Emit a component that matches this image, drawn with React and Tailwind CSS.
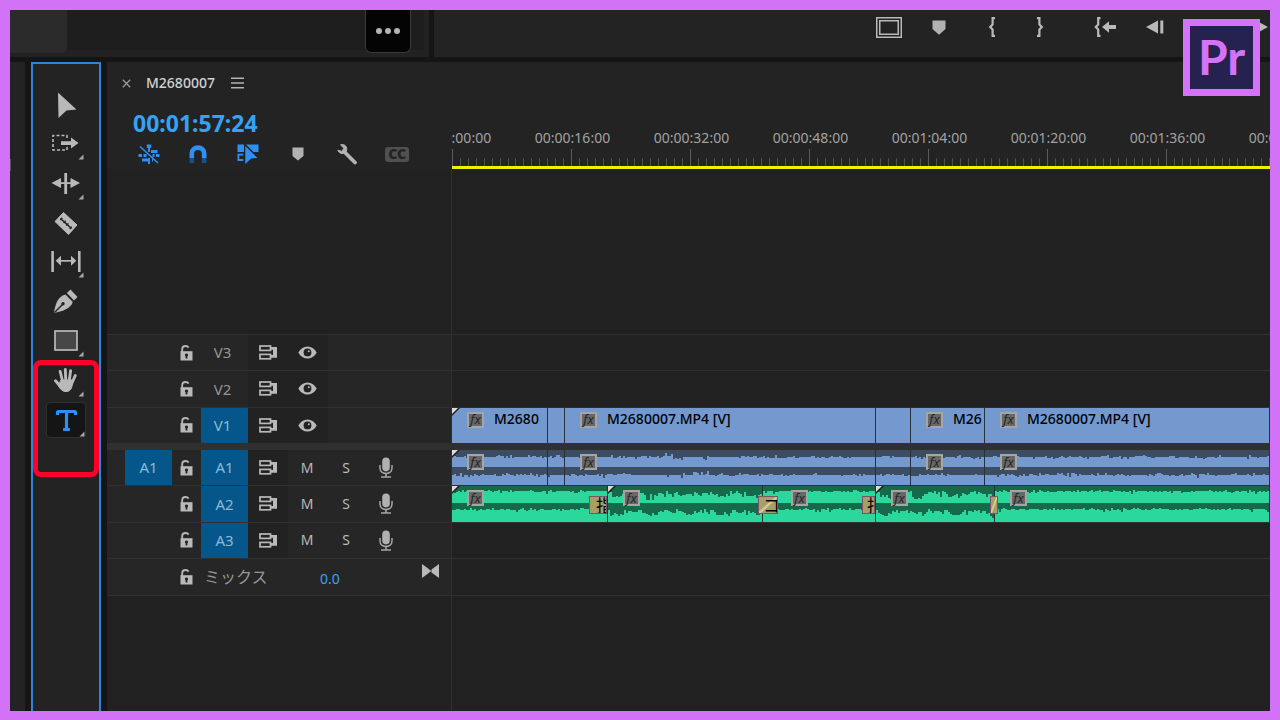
import { Type } from 'lucide-react';

const VIDEO_CLIPS = [
  { id: 1, width: 96, fx: true, label: 'M2680', cut: true },
  { id: 2, width: 17 },
  { id: 3, width: 311, fx: true, label: 'M2680007.MP4 [V]' },
  { id: 4, width: 35 },
  { id: 5, width: 74, fx: true, label: 'M26' },
  { id: 6, fx: true, label: 'M2680007.MP4 [V]' },
];

const A2_CLIPS = [
  { id: 1, width: 156, fx: true, cut: true },
  { id: 2, width: 155, fx: true, cut: true, loud: true },
  { id: 3, width: 113, fx: true, late: true },
  { id: 4, width: 119, fx: true, cut: true, loud: true },
  { id: 5, fx: true },
];

const TIMES = ['00:00:00:00', '00:00:16:00', '00:00:32:00', '00:00:48:00', '00:01:04:00', '00:01:20:00', '00:01:36:00', '00:01:52:00'];

// Small seeded generator so the waveforms are the same on every render
function rng(seed) {
  let s = seed;
  const next = () => {
    s = (s * 16807) % 2147483647;
    return s / 2147483647;
  };
  for (let i = 0; i < 5; i++) next();
  return next;
}

function wavePath(seed, kind, top, bottom, length) {
  const rand = rng(seed);
  const step = 2;
  let d = `M0 ${bottom}`;
  let burst = 0;
  for (let x = 0; x < length; x += step) {
    let level;
    if (kind === 'loud') {
      // deep dips between phrases, every 30-40px
      const swell = Math.max(0, Math.sin(x / 5.5)) * 3;
      level = 7 + swell + (rand() - 0.5) * 4 + (rand() > 0.88 ? 3 : 0);
    } else if (kind === 'calm') {
      level = 4.5 + (rand() > 0.6 ? 1 : 0) + (rand() > 0.94 ? 2 : 0) - (rand() > 0.8 ? 1 : 0);
    } else {
      if (burst <= 0 && rand() > 0.8) burst = 3 + Math.floor(rand() * 10);
      burst -= 1;
      // the busiest stretch of speech sits around 16-32s
      const busy = length > 300 && length < 400 && x > 90 && x < 145 ? 4 : 1.4;
      level = 7 + (burst > 0 ? (rand() - 0.6) * 2 * busy : 0) + (rand() > 0.96 ? 2 : 0);
    }
    const y = top + Math.round(level);
    d += ` L${x} ${y} L${x + step} ${y}`;
  }
  return `${d} L${length} ${bottom} Z`;
}

function Waveform({ seed, kind, length, className }) {
  return (
    <svg className={`absolute inset-0 h-full w-full ${className}`} fill="currentColor" shapeRendering="crispEdges" aria-hidden="true">
      <path d={wavePath(seed, kind, 0, 17, length)} />
      <path d={wavePath(seed + 1, kind, 18, 36, length)} />
    </svg>
  );
}

function Corner() {
  return <path d="M32.5 33.5 L37.5 28.5 V33.5 Z" fill="#a8a8a8" />;
}

const TOOLS = [
  { name: 'Selection', art: <path d="M12 5.5 L30.5 22.5 L20.5 23.5 L12.5 31 Z" fill="#b9b9b9" /> },
  {
    name: 'Track Select Forward',
    more: true,
    art: (
      <>
        <path d="M21 12 V9.5 H7 V24 H21 V21" fill="none" stroke="#b9b9b9" strokeWidth="1.6" strokeDasharray="3 2" />
        <path d="M15 15.2 H25 V11.5 L32.5 17 L25 22.5 V19 H15 Z" fill="#b9b9b9" />
      </>
    ),
  },
  {
    name: 'Ripple Edit',
    more: true,
    art: (
      <g fill="#b9b9b9">
        <rect x="18.3" y="7" width="2.8" height="21" />
        <path d="M5.5 17 L15 12 V22 Z M34 17 L24.5 12 V22 Z" />
        <rect x="13" y="16.2" width="14" height="1.8" />
      </g>
    ),
  },
  {
    name: 'Razor',
    art: (
      <>
        <path d="M17.5 7.5 L31 20 L22.5 29.5 L9 16.5 Z" fill="#b9b9b9" stroke="#b9b9b9" strokeLinejoin="round" />
        <path d="M14.5 13.5 L25.5 23.5" stroke="#232323" strokeWidth="1.6" />
        <path d="M14.3 15 L16.3 12.8 M17.6 18 L19.6 15.8 M20.4 20.6 L22.4 18.4 M23.7 24 L25.7 21.8" stroke="#232323" strokeWidth="1.4" />
      </>
    ),
  },
  {
    name: 'Slip',
    more: true,
    art: (
      <g fill="#b9b9b9">
        <rect x="5.3" y="7" width="2.6" height="21" />
        <rect x="32" y="7" width="2.6" height="21" />
        <path d="M9.7 16.8 L15 11.8 V21.8 Z M30.3 16.8 L25 11.8 V21.8 Z" />
        <rect x="14" y="16" width="12" height="1.7" />
      </g>
    ),
  },
  {
    name: 'Pen',
    art: (
      <>
        <path d="M24.5 5.5 L31.5 13 L28 16.5 L20.8 9 Z" fill="#b9b9b9" />
        <path d="M19.5 10.5 L26.8 18 C24.5 24.5 18 26.5 8.5 29 L7.8 28.2 C10 19 11.5 13 19.5 10.5 Z" fill="#b9b9b9" />
        <path d="M8.5 28.5 L16.5 20.5" stroke="#232323" strokeWidth="1.4" />
        <circle cx="17" cy="19.8" r="1.7" fill="#232323" />
      </>
    ),
  },
  { name: 'Rectangle', more: true, art: <rect x="9" y="8" width="22" height="19" fill="#474747" stroke="#b9b9b9" strokeWidth="1.7" /> },
  {
    name: 'Hand',
    more: true,
    art: (
      <g stroke="#b9b9b9" strokeLinecap="round" fill="none">
        <path d="M14.2 8.5 L16.5 18 M19.3 6.5 L19.8 18 M24.6 7.8 L23.2 18 M29.3 12.5 L26 20" strokeWidth="2.9" />
        <path d="M9.5 17.8 L15 24" strokeWidth="3" />
        <path d="M15.2 17 H26.8 L26.3 22 C25.5 26.5 23.5 28.6 20 28.6 C16.5 28.6 14.5 26.5 12.5 23 Z" fill="#b9b9b9" strokeWidth="1" strokeLinejoin="round" />
      </g>
    ),
  },
];

function ToolPanel() {
  return (
    <aside className="relative w-[70px] shrink-0 border-2 border-b-0 border-[#2f84dc] bg-[#232323] pt-[21px]">
      <div className="grid h-[355px] grid-rows-9 justify-center">
        {TOOLS.map(tool => (
          <button key={tool.name} type="button" aria-label={tool.name} className="flex items-center">
            <svg width="40" height="36" viewBox="0 0 40 36">
              {tool.art}
              {tool.more && <Corner />}
            </svg>
          </button>
        ))}
        <button type="button" aria-label="Type" className="relative flex h-9 w-10 items-center justify-center self-center rounded border border-[#303030] bg-[#151515]">
          <Type className="text-[#2f8ff5]" size={27} strokeWidth={2.8} strokeLinecap="butt" strokeLinejoin="miter" />
          <svg className="absolute inset-0" width="40" height="36" viewBox="0 0 40 36">
            <Corner />
          </svg>
        </button>
      </div>
      <div className="pointer-events-none absolute inset-x-0 top-[296px] h-[117px] rounded-lg border-[5px] border-[#ff0028]" />
    </aside>
  );
}

function MarkerIcon() {
  return (
    <svg width="14" height="15" viewBox="0 0 14 15">
      <path d="M0.5 0.5 H13.5 V9 L7 14.8 L0.5 9 Z" fill="#b2b2b2" />
    </svg>
  );
}

function Brace({ flip }) {
  return (
    <svg width="8" height="20" viewBox="0 0 8 20" className={flip ? 'rotate-180' : ''}>
      <path d="M7 1.2 H4.6 V7.5 L2.2 10 L4.6 12.5 V18.8 H7" fill="none" stroke="#b9b9b9" strokeWidth="2.2" />
    </svg>
  );
}

function MonitorBar() {
  const btn = 'flex h-[34px] items-center justify-center';
  return (
    <div className="flex min-w-0 flex-1 items-start justify-end overflow-hidden bg-[#232323]">
      <button type="button" aria-label="Safe Margins" className={`${btn} w-[50px]`}>
        <svg width="26" height="21" viewBox="0 0 26 21" fill="none" stroke="#b9b9b9">
          <rect x="0.75" y="0.75" width="24.5" height="19.5" strokeWidth="1.5" />
          <rect x="3.75" y="3.75" width="18.5" height="13.5" strokeWidth="1.5" />
        </svg>
      </button>
      <button type="button" aria-label="Add Marker" className={`${btn} w-[50px]`}><MarkerIcon /></button>
      <div className="mr-4 ml-1 flex">
        <button type="button" aria-label="Mark In" className={`${btn} w-12`}><Brace /></button>
        <button type="button" aria-label="Mark Out" className={`${btn} w-12`}><Brace flip /></button>
      </div>
      <button type="button" aria-label="Go to In" className={`${btn} w-[50px]`}>
        <svg width="23" height="20" viewBox="0 0 23 20">
          <path d="M6.5 1.2 H4.2 V7.5 L1.8 10 L4.2 12.5 V18.8 H6.5" fill="none" stroke="#b9b9b9" strokeWidth="2.2" />
          <path d="M8 10 L15 4.2 V8 H22 V12 H15 V15.8 Z" fill="#b9b9b9" />
        </svg>
      </button>
      <button type="button" aria-label="Step Back" className={`${btn} w-[50px]`}>
        <svg width="20" height="14" viewBox="0 0 20 14" fill="#b9b9b9">
          <path d="M1 7 L13 0.5 V13.5 Z" />
          <rect x="15.3" y="0.5" width="3" height="13" />
        </svg>
      </button>
      <button type="button" aria-label="Play" className={`${btn} w-[50px]`}>
        <svg width="16" height="18" viewBox="0 0 16 18" fill="#b9b9b9"><path d="M1 1 L15 9 L1 17 Z" /></svg>
      </button>
      <button type="button" aria-label="Step Forward" className={`${btn} w-10`}>
        <svg width="36" height="14" viewBox="0 0 36 14" fill="#b9b9b9">
          <rect x="19" y="0.5" width="3" height="13" />
          <path d="M24 0.5 L36 7 L24 13.5 Z" />
        </svg>
      </button>
    </div>
  );
}

function TopBar() {
  return (
    <header className="flex h-[47px] shrink-0">
      <div className="flex w-[419px] shrink-0 bg-[#222222] pr-[5px]">
        <div className="h-[43px] w-[57px] rounded-br-md bg-[#2b2b2b]" />
        <div className="flex h-10 flex-1 justify-end bg-[#1e1e1e] pr-[13px]">
          <button type="button" aria-label="More" className="flex h-[43px] w-[46px] items-center justify-center gap-[3px] rounded-b-md border border-t-0 border-[#3a3a3a] bg-[#040404] pb-px">
            <span className="size-[6px] rounded-full bg-[#b5b5b5]" />
            <span className="size-[6px] rounded-full bg-[#b5b5b5]" />
            <span className="size-[6px] rounded-full bg-[#b5b5b5]" />
          </button>
        </div>
      </div>
      <div className="w-[5px] shrink-0" />
      <MonitorBar />
    </header>
  );
}

function LockIcon() {
  return (
    <svg width="13" height="16" viewBox="0 0 13 16">
      <path d="M2.2 7 V4.2 C2.2 1.8 4 1 5.5 1 C7 1 8 1.4 8.6 2.6" fill="none" stroke="#b9b9b9" strokeWidth="1.8" />
      <rect x="0.5" y="6.2" width="12" height="9.3" fill="#b9b9b9" />
      <path d="M6.5 8.4 a1.7 1.7 0 0 1 0.9 3.1 V13.6 H5.6 V11.5 a1.7 1.7 0 0 1 0.9 -3.1 Z" fill="#262626" />
    </svg>
  );
}

function SyncIcon() {
  return (
    <svg width="19" height="15" viewBox="0 0 19 15" fill="none" stroke="#b9b9b9">
      <rect x="1" y="1" width="10.5" height="4.4" strokeWidth="1.7" />
      <rect x="1" y="9.4" width="10.5" height="4.4" strokeWidth="1.7" />
      <path d="M12 2 H18 V12.8 H12 V10 H14 V4.8 H12 Z" fill="#b9b9b9" stroke="none" />
    </svg>
  );
}

function EyeIcon() {
  return (
    <svg width="19" height="13" viewBox="0 0 19 13">
      <path d="M0.3 6.5 C4.5 -1.6 14.5 -1.6 18.7 6.5 C14.5 14.6 4.5 14.6 0.3 6.5 Z" fill="#b9b9b9" />
      <circle cx="9.5" cy="6.4" r="3.9" fill="#222222" />
      <circle cx="10.8" cy="5.2" r="1" fill="#b9b9b9" />
    </svg>
  );
}

function MicIcon() {
  return (
    <svg width="14" height="21" viewBox="0 0 14 21" fill="none" stroke="#a6a6a6">
      <rect x="3.2" y="0.4" width="7.6" height="14" rx="3.8" fill="#b0b0b0" stroke="none" />
      <path d="M1 8 V11 C1 18.2 13 18.2 13 11 V8" strokeWidth="1.5" />
      <path d="M7 16.5 V20 M2 20 H12" strokeWidth="1.6" />
    </svg>
  );
}

function TrackHeader({ name, source, active, audio }) {
  return (
    <div className="flex border-t border-[#303030] bg-[#262626] pl-[18px] text-[15px] text-[#969696]">
      <button type="button" aria-label={`Source ${name}`} className={`w-[47px] ${source ? 'bg-[#05568a] text-[#8db9d8]' : ''}`}>{source}</button>
      <button type="button" aria-label={`Lock ${name}`} className="flex w-[29px] items-center justify-center"><LockIcon /></button>
      <button type="button" className={`w-[47px] ${audio ? '' : 'pr-1'} ${active ? 'bg-[#05568a] text-[#8db9d8]' : ''}`}>{name}</button>
      <button type="button" aria-label={`Sync Lock ${name}`} className="flex w-10 items-center justify-center bg-[#222222]"><SyncIcon /></button>
      {audio ? (
        <>
          <button type="button" aria-label={`Mute ${name}`} className="w-[38px] text-sm text-[#b9b9b9]">M</button>
          <button type="button" aria-label={`Solo ${name}`} className="w-10 text-sm text-[#b9b9b9]">S</button>
          <button type="button" aria-label={`Record ${name}`} className="flex w-10 items-center justify-center"><MicIcon /></button>
        </>
      ) : (
        <button type="button" aria-label={`Toggle Output ${name}`} className="flex w-10 items-center justify-center bg-[#222222] pr-[2px]"><EyeIcon /></button>
      )}
    </div>
  );
}

function TimelineTools() {
  const btn = 'flex items-center justify-center';
  return (
    <div className="ml-[17px] grid h-[22px] w-[298px] grid-cols-6">
      <button type="button" aria-label="Insert as nests" className={btn}>
        <svg width="22" height="21" viewBox="0 0 22 21" stroke="#2f8ff5" fill="#2f8ff5">
          <path d="M2 2.5 L20 19" strokeWidth="1.6" />
          <path d="M11 1 V8 M11 14 V20" strokeWidth="2" />
          <rect x="8.8" y="0.5" width="4.4" height="3.4" stroke="none" />
          <path d="M13 7.5 H19.5 M14.5 11.5 H16.5 M18 11.5 H21.5 M0.5 11.5 H4 M5.5 11.5 H8.5 M4 16 H10 M14 16 H15" strokeWidth="2.8" />
        </svg>
      </button>
      <button type="button" aria-label="Snap" className={btn}>
        <svg width="18" height="18" viewBox="0 0 18 18" fill="none" strokeWidth="4.6">
          <path d="M2.8 13 V8.5 C2.8 0.6 15.2 0.6 15.2 8.5 V13" stroke="#2f8ff5" />
          <path d="M2.8 13 V18 M15.2 13 V18" stroke="#1a4f85" />
        </svg>
      </button>
      <button type="button" aria-label="Linked Selection" className={btn}>
        <svg width="22" height="20" viewBox="0 0 22 20" fill="#2f8ff5">
          <path d="M0.5 0.5 H7 V8 H0.5 Z M9 0.5 H21.5 V8 H16.5 Z" />
          <path d="M6.3 10.6 H1.4 V16 H6.3" fill="none" stroke="#2f8ff5" strokeWidth="1.8" />
          <path d="M8.3 2 L20.5 14 L14.2 14.5 L8.3 20 Z" />
        </svg>
      </button>
      <button type="button" aria-label="Add Marker" className={btn}>
        <svg width="12" height="14" viewBox="0 0 12 14"><path d="M0.5 0.5 H11.5 V9 L6 13.6 L0.5 9 Z" fill="#b2b2b2" /></svg>
      </button>
      <button type="button" aria-label="Timeline Display Settings" className={btn}>
        <svg width="22" height="22" viewBox="0 0 22 22" fill="none" stroke="#b2b2b2">
          <path d="M9 9.5 L19 19.5" strokeWidth="3.8" strokeLinecap="round" />
          <path d="M4.6 1.8 C9 0.6 11.8 4.2 10.4 8 C8.6 11.8 3.2 11.2 1.8 7.2 L6 8.4 L7.8 5.2 Z" fill="#b2b2b2" strokeWidth="1" />
        </svg>
      </button>
      <button type="button" aria-label="Captions" className={btn}>
        <span className="flex h-[15px] w-6 items-center justify-center rounded-[3px] bg-[#505050] text-sm font-black text-[#232323]">CC</span>
      </button>
    </div>
  );
}

function Ruler() {
  const ticks = Array.from({ length: 240 }, (_, i) => i);
  return (
    <div className="flex h-[65px] flex-col justify-end overflow-hidden pl-px">
      <div className="-ml-[58px] flex pb-px text-sm leading-5 text-[#a2a2a2]">
        {TIMES.map(time => <span key={time} className="w-[119px] shrink-0 text-center">{time}</span>)}
      </div>
      <svg className="h-[17px] w-full shrink-0" aria-hidden="true">
        {ticks.map(i => (
          <rect key={i} x={Math.round((i * 119) / 15)} y={i % 15 ? 9 : 0} width="1" height={i % 15 ? 8 : 17} fill={i % 15 ? '#4d4d4d' : '#5c5c5c'} />
        ))}
      </svg>
      <div className="h-[3px] shrink-0 bg-[#f2f000]" />
    </div>
  );
}

function FxBadge() {
  return (
    <span className="relative flex h-4 w-[17px] shrink-0 items-center justify-center border-2 border-[#a5a5a5] bg-[#686868] text-[13px] leading-none text-[#262626] italic">fx</span>
  );
}

function CutCorner() {
  return (
    <svg className="absolute top-0 left-0" width="8" height="8" viewBox="0 0 8 8">
      <path d="M0 0 H8 L0 8 Z" fill="#1c1c1c" />
      <path d="M0 0 H6 L0 6 Z" fill="#dcdcdc" />
    </svg>
  );
}

function Clip({ clip, tone, children }) {
  return (
    <div
      style={clip.width ? { width: clip.width } : undefined}
      className={`relative flex items-start overflow-hidden border-r border-[#26303c] pt-1 ${clip.late ? 'pl-7' : 'pl-[15px]'} ${clip.width ? 'shrink-0' : 'flex-1'} ${tone}`}
    >
      {children}
      {clip.cut && <CutCorner />}
      {clip.fx && <FxBadge />}
      {clip.label && <span className="ml-[10px] text-sm leading-[14px] font-medium whitespace-nowrap text-black">{clip.label}</span>}
    </div>
  );
}

// Audio transition boxes lie over the cut between two clips
function Transition({ className, children }) {
  return (
    <div className={`absolute top-[10px] h-[18px] overflow-hidden border border-[#76576a] bg-[#a89f68] text-[17px] leading-[17px] whitespace-nowrap text-black ${className}`}>
      {children}
    </div>
  );
}

function Tracks() {
  return (
    <>
      <div className="grid h-[109px] grid-rows-3">
        <div className="border-t border-[#303030]" />
        <div className="border-t border-[#303030]" />
        <div className="flex border-t border-[#303030]">
          {VIDEO_CLIPS.map(clip => <Clip key={clip.id} clip={clip} tone="bg-[#7399cf]" />)}
        </div>
      </div>
      <div className="h-[6px] bg-[#303030]" />
      <div className="grid h-[109px] grid-rows-3">
        <div className="flex border-t border-[#303030]">
          {VIDEO_CLIPS.map(clip => (
            <Clip key={clip.id} clip={{ ...clip, label: '' }} tone="bg-[#3b4c63]">
              <Waveform seed={clip.id * 977} kind="speech" length={clip.width || 2000} className="text-[#7399cf]" />
            </Clip>
          ))}
        </div>
        <div className="relative flex border-t border-[#303030]">
          {A2_CLIPS.map(clip => (
            <Clip key={clip.id} clip={clip} tone="bg-[#17694b]">
              <Waveform seed={clip.id * 1409} kind={clip.loud ? 'loud' : 'calm'} length={clip.width || 2000} className="text-[#29d89a]" />
            </Clip>
          ))}
          <Transition className="left-[137px] w-[18px] pl-[6px]">指</Transition>
          <Transition className="left-[306px] w-5 pl-1">
            <svg className="absolute inset-0 h-full w-full" viewBox="0 0 18 16" preserveAspectRatio="none">
              <path d="M0 16 L18 0" stroke="#d8c690" strokeWidth="2.5" />
            </svg>
            <span className="relative">コ</span>
          </Transition>
          <Transition className="left-[410px] w-[13px] pl-1">指</Transition>
          <Transition className="left-[538px] w-2">
            <svg className="absolute inset-0 h-full w-full" viewBox="0 0 5 16" preserveAspectRatio="none">
              <path d="M0 16 L5 0" stroke="#e0cc90" strokeWidth="1.5" />
            </svg>
          </Transition>
        </div>
        <div className="border-t border-[#303030]" />
      </div>
      <div className="h-[38px] border-y border-[#303030]" />
    </>
  );
}

function Timeline() {
  return (
    <main className="flex min-w-0 flex-1 flex-col overflow-hidden bg-[#232323]">
      <div className="flex h-[42px] shrink-0 items-center pl-[15px]">
        <button type="button" aria-label="Close" className="mr-[15px]">
          <svg width="9" height="9" viewBox="0 0 9 9" stroke="#9a9a9a" strokeWidth="1.3"><path d="M0.8 0.8 L8.2 8.2 M8.2 0.8 L0.8 8.2" /></svg>
        </button>
        <h1 className="text-sm font-medium text-[#d2d2d2]">M2680007</h1>
        <button type="button" aria-label="Panel menu" className="ml-4">
          <svg width="13" height="12" viewBox="0 0 13 12" fill="#b4b4b4"><path d="M0 0.5 H13 V2 H0 Z M0 5.2 H13 V6.7 H0 Z M0 9.9 H13 V11.4 H0 Z" /></svg>
        </button>
      </div>
      <div className="flex flex-1">
        <div className="flex w-[344px] shrink-0 flex-col">
          <div className="h-[65px]">
            <div className="flex h-[39px] items-center pl-[26px] text-[23px] font-bold text-[#35a3f5]">00:01:57:24</div>
            <TimelineTools />
          </div>
          <div className="h-[165px] bg-[#212121]" />
          <div className="grid h-[109px] grid-rows-3">
            <TrackHeader name="V3" />
            <TrackHeader name="V2" />
            <TrackHeader name="V1" active />
          </div>
          <div className="h-[6px] bg-[#303030]" />
          <div className="grid h-[109px] grid-rows-3">
            <TrackHeader name="A1" source="A1" active audio />
            <TrackHeader name="A2" active audio />
            <TrackHeader name="A3" active audio />
          </div>
          <div className="flex h-[38px] items-center border-y border-[#303030] bg-[#262626] pr-3 pl-[65px]">
            <button type="button" aria-label="Lock Mix" className="flex w-[29px] items-center justify-center"><LockIcon /></button>
            <span className="ml-[3px] w-[116px] text-base text-[#969696]">ミックス</span>
            <span className="pt-[3px] text-sm text-[#35a3f5]">0.0</span>
            <button type="button" aria-label="Mix keyframes" className="mb-3 ml-auto">
              <svg width="17" height="14" viewBox="0 0 17 14" fill="#b9b9b9">
                <path d="M0 0 L7.5 5.5 V8.5 L0 14 Z M17 0 L9.5 5.5 V8.5 L17 14 Z M7 6.3 H10 V7.7 H7 Z" />
              </svg>
            </button>
          </div>
          <div className="flex-1 bg-[#212121]" />
        </div>
        <div className="flex min-w-0 flex-1 flex-col">
          <Ruler />
          <div className="flex-1 border-l border-[#303030] bg-[#212121] pt-[165px]">
            <Tracks />
          </div>
        </div>
      </div>
    </main>
  );
}

export default function App() {
  return (
    <div className="relative flex min-h-screen flex-col gap-[5px] overflow-hidden border-[10px] border-b-[9px] border-[#d172f7] bg-[#151515] font-['Noto_Sans','Noto_Sans_CJK_JP',sans-serif]">
      <TopBar />
      <div className="flex flex-1 gap-[6px]">
        <div className="w-[15px] shrink-0 bg-[#232323] pt-[97px]">
          <div className="h-3 w-px bg-[#555555]" />
        </div>
        <ToolPanel />
        <Timeline />
      </div>
      <div className="absolute top-[9px] right-[10px] flex size-[77px] items-center justify-center border-[7px] border-[#d473f8] bg-[#25224f] pb-px font-['Lato',sans-serif] text-5xl font-bold text-[#d473f8]">
        Pr
      </div>
    </div>
  );
}
